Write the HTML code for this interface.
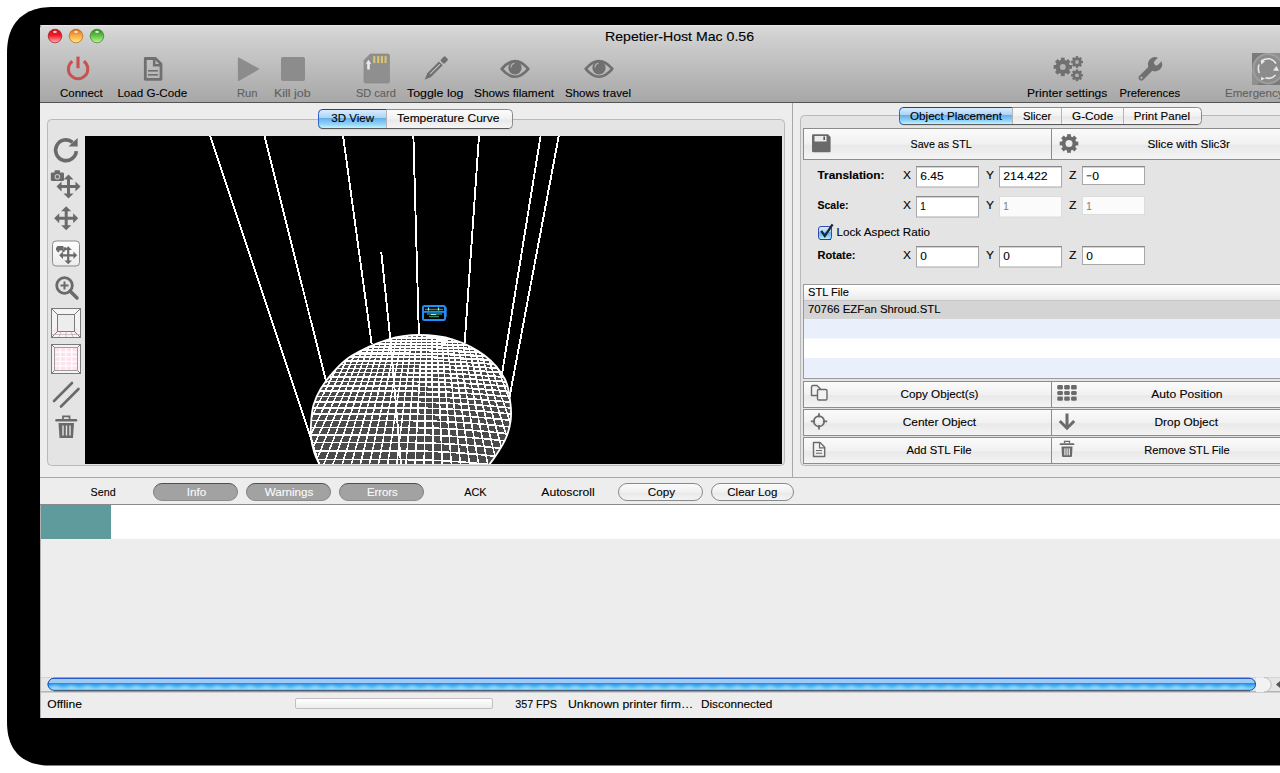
<!DOCTYPE html>
<html><head><meta charset="utf-8"><style>
html,body{margin:0;padding:0;background:#fff;overflow:hidden;width:1280px;height:773px;}
svg{display:block;font-family:"Liberation Sans",sans-serif;}
</style></head><body>
<svg width="1280" height="773" viewBox="0 0 1280 773">
<defs>
<linearGradient id="gTool" x1="0" y1="0" x2="0" y2="1">
 <stop offset="0" stop-color="#dcdcdc"/><stop offset="0.15" stop-color="#d0d0d0"/><stop offset="1" stop-color="#a7a7a7"/>
</linearGradient>
<linearGradient id="gTabSel" x1="0" y1="0" x2="0" y2="1">
 <stop offset="0" stop-color="#dcefff"/><stop offset="0.42" stop-color="#acd4f6"/><stop offset="0.47" stop-color="#66b0ea"/><stop offset="0.8" stop-color="#98d6fa"/><stop offset="1" stop-color="#c4fbff"/>
</linearGradient>
<linearGradient id="gTab" x1="0" y1="0" x2="0" y2="1">
 <stop offset="0" stop-color="#fdfdfd"/><stop offset="0.5" stop-color="#f1f1f1"/><stop offset="0.55" stop-color="#e8e8e8"/><stop offset="1" stop-color="#f6f6f6"/>
</linearGradient>
<linearGradient id="gBtn" x1="0" y1="0" x2="0" y2="1">
 <stop offset="0" stop-color="#fbfbfb"/><stop offset="0.5" stop-color="#f1f1f1"/><stop offset="0.55" stop-color="#e9e9e9"/><stop offset="1" stop-color="#f4f4f4"/>
</linearGradient>
<linearGradient id="gBevel" x1="0" y1="0" x2="0" y2="1">
 <stop offset="0" stop-color="#ffffff"/><stop offset="1" stop-color="#ececec"/>
</linearGradient>
<linearGradient id="gHdr" x1="0" y1="0" x2="0" y2="1">
 <stop offset="0" stop-color="#ffffff"/><stop offset="0.5" stop-color="#f6f6f6"/><stop offset="1" stop-color="#e9e9e9"/>
</linearGradient>
<linearGradient id="gProg" x1="0" y1="0" x2="0" y2="1">
 <stop offset="0" stop-color="#3a70d8"/><stop offset="0.1" stop-color="#a4ccf2"/><stop offset="0.38" stop-color="#9ec9f0"/><stop offset="0.42" stop-color="#1e8ee8"/><stop offset="1" stop-color="#9eeefe"/>
</linearGradient>
<linearGradient id="gTrack" x1="0" y1="0" x2="0" y2="1">
 <stop offset="0" stop-color="#b0b0b0"/><stop offset="0.2" stop-color="#f0f0f0"/><stop offset="1" stop-color="#dcdcdc"/>
</linearGradient>
<linearGradient id="gRed" x1="0" y1="0" x2="0" y2="1"><stop offset="0" stop-color="#c8101a"/><stop offset="0.45" stop-color="#f41828"/><stop offset="1" stop-color="#ffb4bc"/></linearGradient>
<linearGradient id="gYel" x1="0" y1="0" x2="0" y2="1"><stop offset="0" stop-color="#d86a10"/><stop offset="0.45" stop-color="#f8a848"/><stop offset="1" stop-color="#ffee80"/></linearGradient>
<linearGradient id="gGrn" x1="0" y1="0" x2="0" y2="1"><stop offset="0" stop-color="#2a8a20"/><stop offset="0.45" stop-color="#5cc040"/><stop offset="1" stop-color="#c4f49a"/></linearGradient>
<radialGradient id="gSpot" cx="0.5" cy="0.5" r="0.5"><stop offset="0" stop-color="#ffffff" stop-opacity="0.3"/><stop offset="1" stop-color="#ffffff" stop-opacity="0"/></radialGradient>
<pattern id="pSpots" x="47" y="677.8" width="16.25" height="13" patternUnits="userSpaceOnUse"><ellipse cx="8" cy="9.5" rx="7" ry="4" fill="url(#gSpot)"/></pattern>
<linearGradient id="gPillStroke" x1="0" y1="0" x2="0" y2="1"><stop offset="0" stop-color="#505050"/><stop offset="0.3" stop-color="#7a7a7a"/><stop offset="1" stop-color="#8c8c8c"/></linearGradient>
<clipPath id="clipView"><rect x="85" y="136" width="697" height="328"/></clipPath>
<clipPath id="clipBed"><ellipse cx="410" cy="436" rx="100" ry="101"/></clipPath>
<clipPath id="clipBed2"><path d="M419,335 C429.83,335.00 442.07,336.08 453,339.5 C463.93,342.92 475.97,348.92 484.6,355.5 C493.23,362.08 500.48,370.92 504.8,379 C509.12,387.08 509.53,397.00 510.5,404 C511.47,411.00 511.28,415.50 510.6,421 C509.92,426.50 508.58,431.67 506.4,437 C504.22,442.33 500.90,447.83 497.5,453 C494.10,458.17 492.25,461.83 486,468 C479.75,474.17 486.00,486.33 460,490 C434.00,493.67 353.17,493.67 330,490 C306.83,486.33 323.60,474.17 321,468 C318.40,461.83 316.07,458.17 314.4,453 C312.73,447.83 311.53,442.33 311,437 C310.47,431.67 310.77,426.38 311.2,421 C311.63,415.62 311.98,410.12 313.6,404.7 C315.22,399.28 317.67,393.88 320.9,388.5 C324.13,383.12 327.82,377.90 333,372.4 C338.18,366.90 342.83,360.98 352,355.5 C361.17,350.02 376.83,342.92 388,339.5 C399.17,336.08 408.17,335.00 419,335 Z"/></clipPath></defs>
<rect x="0" y="0" width="1280" height="773" fill="#fff"/>
<path d="M1300,7 L55.00,7.00 L50.68,7.05 L47.40,7.21 L44.44,7.48 L41.68,7.86 L39.08,8.34 L36.60,8.93 L34.23,9.62 L31.97,10.42 L29.81,11.32 L27.74,12.32 L25.77,13.42 L23.89,14.63 L22.11,15.93 L20.42,17.33 L18.83,18.83 L17.33,20.42 L15.93,22.11 L14.63,23.89 L13.42,25.77 L12.32,27.74 L11.32,29.81 L10.42,31.97 L9.62,34.23 L8.93,36.60 L8.34,39.08 L7.86,41.68 L7.48,44.44 L7.21,47.40 L7.05,50.68 L7.00,55.00 L7.00,719.60 L7.05,723.94 L7.20,727.15 L7.45,730.03 L7.81,732.69 L8.26,735.20 L8.81,737.58 L9.46,739.84 L10.21,742.00 L11.06,744.06 L12.00,746.02 L13.04,747.89 L14.17,749.67 L15.40,751.36 L16.72,752.96 L18.14,754.46 L19.64,755.88 L21.24,757.20 L22.93,758.43 L24.71,759.56 L26.58,760.60 L28.54,761.54 L30.60,762.39 L32.76,763.14 L35.02,763.79 L37.40,764.34 L39.91,764.79 L42.57,765.15 L45.45,765.40 L48.66,765.55 L53.00,765.60 L1300,765.6 Z" fill="#000"/>
<path d="M40,29 Q40,25 44,25 L1280,25 L1280,718 L40,718 Z" fill="#ededed"/>
<path d="M40,29 Q40,25 44,25 L1280,25 L1280,102 L40,102 Z" fill="url(#gTool)"/>
<rect x="40" y="25" width="1240" height="1" fill="#ececec" opacity="0.8"/>
<rect x="40" y="102" width="1240" height="1" fill="#545454"/>
<circle cx="55" cy="36" r="6.8" fill="url(#gRed)" stroke="#9a1010" stroke-width="0.9" stroke-opacity="0.75"/>
<ellipse cx="55" cy="31.9" rx="1.9" ry="1.1" fill="#fff" opacity="0.8"/>
<circle cx="76" cy="36" r="6.8" fill="url(#gYel)" stroke="#b0600a" stroke-width="0.9" stroke-opacity="0.75"/>
<ellipse cx="76" cy="31.9" rx="1.9" ry="1.1" fill="#fff" opacity="0.8"/>
<circle cx="97" cy="36" r="6.8" fill="url(#gGrn)" stroke="#2f7a20" stroke-width="0.9" stroke-opacity="0.75"/>
<ellipse cx="97" cy="31.9" rx="1.9" ry="1.1" fill="#fff" opacity="0.8"/>
<text x="605" y="40.5" font-size="13" font-weight="normal" fill="#000" text-anchor="start" textLength="149" lengthAdjust="spacingAndGlyphs" stroke="#000" stroke-width="0.1" >Repetier-Host Mac 0.56</text>
<text x="60" y="96.9" font-size="11" font-weight="normal" fill="#000" text-anchor="start" textLength="42.7" lengthAdjust="spacingAndGlyphs" stroke="#000" stroke-width="0.1" >Connect</text>
<text x="117.4" y="96.9" font-size="11" font-weight="normal" fill="#000" text-anchor="start" textLength="69.7" lengthAdjust="spacingAndGlyphs" stroke="#000" stroke-width="0.1" >Load G-Code</text>
<text x="237" y="96.9" font-size="11" font-weight="normal" fill="#606060" text-anchor="start" textLength="20.5" lengthAdjust="spacingAndGlyphs" stroke="#606060" stroke-width="0.1" >Run</text>
<text x="274" y="96.9" font-size="11" font-weight="normal" fill="#606060" text-anchor="start" textLength="36.6" lengthAdjust="spacingAndGlyphs" stroke="#606060" stroke-width="0.1" >Kill job</text>
<text x="356" y="96.9" font-size="11" font-weight="normal" fill="#606060" text-anchor="start" textLength="39.8" lengthAdjust="spacingAndGlyphs" stroke="#606060" stroke-width="0.1" >SD card</text>
<text x="407" y="96.9" font-size="11" font-weight="normal" fill="#000" text-anchor="start" textLength="56.4" lengthAdjust="spacingAndGlyphs" stroke="#000" stroke-width="0.1" >Toggle log</text>
<text x="474" y="96.9" font-size="11" font-weight="normal" fill="#000" text-anchor="start" textLength="80.1" lengthAdjust="spacingAndGlyphs" stroke="#000" stroke-width="0.1" >Shows filament</text>
<text x="565" y="96.9" font-size="11" font-weight="normal" fill="#000" text-anchor="start" textLength="66" lengthAdjust="spacingAndGlyphs" stroke="#000" stroke-width="0.1" >Shows travel</text>
<text x="1027" y="96.9" font-size="11" font-weight="normal" fill="#000" text-anchor="start" textLength="80.3" lengthAdjust="spacingAndGlyphs" stroke="#000" stroke-width="0.1" >Printer settings</text>
<text x="1119.5" y="96.9" font-size="11" font-weight="normal" fill="#000" text-anchor="start" textLength="60.5" lengthAdjust="spacingAndGlyphs" stroke="#000" stroke-width="0.1" >Preferences</text>
<text x="1225" y="96.9" font-size="11" font-weight="normal" fill="#606060" text-anchor="start" textLength="58.5" lengthAdjust="spacingAndGlyphs" stroke="#606060" stroke-width="0.1" >Emergency</text>
<path d="M72.4,61.2 A9.7,9.7 0 1 0 83.8,61.2" fill="none" stroke="#c85252" stroke-width="3" stroke-linecap="butt"/>
<rect x="76.4" y="56.6" width="3.2" height="11.6" fill="#c85252"/>
<path d="M145.3,58.5 L155.5,58.5 L161,64 L161,79.3 L145.3,79.3 Z" fill="none" stroke="#707070" stroke-width="2.8" stroke-linejoin="round"/>
<path d="M154.2,58.5 L154.2,65.3 L161,65.3" fill="none" stroke="#707070" stroke-width="2.6"/>
<rect x="148" y="70" width="10" height="1.6" fill="#707070"/><rect x="148" y="74" width="10" height="1.6" fill="#707070"/>
<path d="M238.5,58 L258.5,69 L238.5,80.5 Z" fill="#8c8c8c" stroke="#8c8c8c" stroke-width="1.2" stroke-linejoin="round"/>
<rect x="281" y="57" width="24" height="24" rx="2" fill="#8c8c8c"/>
<path d="M370.3,54 L388,54 Q389.5,54 389.5,55.5 L389.5,81.5 Q389.5,83 388,83 L365.5,83 Q364,83 364,81.5 L364,60.3 Z" fill="#8f8f8f" stroke="#858585" stroke-width="0.6"/>
<rect x="373.2" y="56.1" width="2.1" height="7" fill="#dcc470"/>
<rect x="377.2" y="56.1" width="2.1" height="7" fill="#dcc470"/>
<rect x="380.9" y="56.1" width="2.1" height="7" fill="#dcc470"/>
<rect x="384.5" y="56.1" width="2.1" height="7" fill="#dcc470"/>
<path d="M368.5,59.8 L371.2,63.8 L369.8,63.8 L369.8,69.6 L367.2,69.6 L367.2,63.8 L365.8,63.8 Z" fill="#ececec"/>
<g transform="translate(424.6,79.7) rotate(-45)" fill="#707070"><path d="M0,0 L6.5,-2.7 L6.5,2.7 Z"/><rect x="6" y="-2.7" width="17" height="5.4"/><rect x="24.6" y="-2.7" width="6.4" height="5.4" rx="1.3"/><rect x="8" y="-0.6" width="14" height="1" fill="#e0e0e0" opacity="0.75"/></g>
<path d="M501.7,68.9 Q515,53.2 528.3,68.9 Q515,84.6 501.7,68.9 Z" fill="none" stroke="#707070" stroke-width="2.7" stroke-linejoin="round"/>
<circle cx="515" cy="67.8" r="6.7" fill="#707070"/>
<path d="M511,67.5 A4.3,4.3 0 0 1 514.5,63.3" fill="none" stroke="#b8b8b8" stroke-width="1.1"/>
<path d="M585.7,68.9 Q599,53.2 612.3,68.9 Q599,84.6 585.7,68.9 Z" fill="none" stroke="#707070" stroke-width="2.7" stroke-linejoin="round"/>
<circle cx="599" cy="67.8" r="6.7" fill="#707070"/>
<path d="M595,67.5 A4.3,4.3 0 0 1 598.5,63.3" fill="none" stroke="#b8b8b8" stroke-width="1.1"/>
<circle cx="1062.8" cy="66.9" r="7.175999999999999" fill="#707070"/>
<rect x="1060.8999999999999" y="57.7" width="3.8" height="9.2" fill="#707070" transform="rotate(0.0 1062.8 66.9)"/>
<rect x="1060.8999999999999" y="57.7" width="3.8" height="9.2" fill="#707070" transform="rotate(45.0 1062.8 66.9)"/>
<rect x="1060.8999999999999" y="57.7" width="3.8" height="9.2" fill="#707070" transform="rotate(90.0 1062.8 66.9)"/>
<rect x="1060.8999999999999" y="57.7" width="3.8" height="9.2" fill="#707070" transform="rotate(135.0 1062.8 66.9)"/>
<rect x="1060.8999999999999" y="57.7" width="3.8" height="9.2" fill="#707070" transform="rotate(180.0 1062.8 66.9)"/>
<rect x="1060.8999999999999" y="57.7" width="3.8" height="9.2" fill="#707070" transform="rotate(225.0 1062.8 66.9)"/>
<rect x="1060.8999999999999" y="57.7" width="3.8" height="9.2" fill="#707070" transform="rotate(270.0 1062.8 66.9)"/>
<rect x="1060.8999999999999" y="57.7" width="3.8" height="9.2" fill="#707070" transform="rotate(315.0 1062.8 66.9)"/>
<circle cx="1062.8" cy="66.9" r="3.0" fill="#b2b2b2"/>
<circle cx="1077" cy="62" r="4.602" fill="#707070"/>
<rect x="1075.75" y="56.1" width="2.5" height="5.9" fill="#707070" transform="rotate(0.0 1077 62)"/>
<rect x="1075.75" y="56.1" width="2.5" height="5.9" fill="#707070" transform="rotate(45.0 1077 62)"/>
<rect x="1075.75" y="56.1" width="2.5" height="5.9" fill="#707070" transform="rotate(90.0 1077 62)"/>
<rect x="1075.75" y="56.1" width="2.5" height="5.9" fill="#707070" transform="rotate(135.0 1077 62)"/>
<rect x="1075.75" y="56.1" width="2.5" height="5.9" fill="#707070" transform="rotate(180.0 1077 62)"/>
<rect x="1075.75" y="56.1" width="2.5" height="5.9" fill="#707070" transform="rotate(225.0 1077 62)"/>
<rect x="1075.75" y="56.1" width="2.5" height="5.9" fill="#707070" transform="rotate(270.0 1077 62)"/>
<rect x="1075.75" y="56.1" width="2.5" height="5.9" fill="#707070" transform="rotate(315.0 1077 62)"/>
<circle cx="1077" cy="62" r="1.9" fill="#b2b2b2"/>
<circle cx="1077" cy="75.3" r="4.602" fill="#707070"/>
<rect x="1075.75" y="69.39999999999999" width="2.5" height="5.9" fill="#707070" transform="rotate(0.0 1077 75.3)"/>
<rect x="1075.75" y="69.39999999999999" width="2.5" height="5.9" fill="#707070" transform="rotate(45.0 1077 75.3)"/>
<rect x="1075.75" y="69.39999999999999" width="2.5" height="5.9" fill="#707070" transform="rotate(90.0 1077 75.3)"/>
<rect x="1075.75" y="69.39999999999999" width="2.5" height="5.9" fill="#707070" transform="rotate(135.0 1077 75.3)"/>
<rect x="1075.75" y="69.39999999999999" width="2.5" height="5.9" fill="#707070" transform="rotate(180.0 1077 75.3)"/>
<rect x="1075.75" y="69.39999999999999" width="2.5" height="5.9" fill="#707070" transform="rotate(225.0 1077 75.3)"/>
<rect x="1075.75" y="69.39999999999999" width="2.5" height="5.9" fill="#707070" transform="rotate(270.0 1077 75.3)"/>
<rect x="1075.75" y="69.39999999999999" width="2.5" height="5.9" fill="#707070" transform="rotate(315.0 1077 75.3)"/>
<circle cx="1077" cy="75.3" r="1.9" fill="#b2b2b2"/>
<g transform="translate(1155,64.2) rotate(45)" fill="#707070"><path d="M-2.5,-6.75 A7.2,7.2 0 1 0 2.5,-6.75 L2.5,-2 A2.5,2.5 0 0 1 -2.5,-2 Z"/><path d="M-2.8,2 L-2.8,19.2 A2.8,2.8 0 0 0 2.8,19.2 L2.8,2 Z"/><circle cx="0" cy="19.2" r="1.2" fill="#b4b4b4"/></g>
<rect x="1252" y="53" width="30" height="32" fill="#7a7a7a"/>
<path d="M1252,70 L1269,53 L1282,53 L1282,60 L1257,85 L1252,85 Z" fill="#9c9c9c" opacity="0.6"/>
<circle cx="1268" cy="68.7" r="14.7" fill="#8c8c8c" stroke="#9e9e9e" stroke-width="2"/>
<path d="M1261,61.5 A9.5,9.5 0 0 1 1276,63.5 M1275.5,75 A9.5,9.5 0 0 1 1265.5,77.8 M1259.5,73 A9.5,9.5 0 0 1 1259.2,64.5" fill="none" stroke="#e8e8e8" stroke-width="1.6"/>
<path d="M1261,59.5 L1261,64.5 L1265,61.5 Z M1276.5,66 L1279,71 L1273,70.5 Z M1261,77 L1265,78.5 L1261,80.5 Z" fill="#e8e8e8"/>
<rect x="792" y="103" width="1" height="374" fill="#a8a8a8"/>
<rect x="40" y="477" width="1240" height="1" fill="#a8a8a8"/>
<rect x="47.5" y="119.5" width="737" height="346" rx="4" fill="#e4e4e4" stroke="#b9b9b9"/>
<rect x="85" y="136" width="697" height="328" fill="#000"/>
<rect x="318.5" y="110.5" width="194" height="19" rx="4" fill="#000" opacity="0.12"/>
<rect x="318.5" y="109.5" width="194" height="19" rx="4" fill="url(#gTab)" stroke="#8a8a8a"/>
<clipPath id="c318"><rect x="318" y="109" width="68" height="20"/></clipPath>
<rect x="318.5" y="109.5" width="194" height="19" rx="4" fill="url(#gTabSel)" stroke="#2f62c8" clip-path="url(#c318)"/>
<rect x="322" y="109" width="64" height="1" fill="#3434a0"/>
<rect x="322" y="128" width="187" height="1" fill="#5a5a5a"/>
<rect x="386" y="110" width="1" height="18" fill="#b4b4b4"/>
<text x="331.3" y="122" font-size="11" font-weight="normal" fill="#000" text-anchor="start" textLength="42.7" lengthAdjust="spacingAndGlyphs" stroke="#000" stroke-width="0.1" >3D View</text>
<text x="397" y="122" font-size="11" font-weight="normal" fill="#000" text-anchor="start" textLength="102.5" lengthAdjust="spacingAndGlyphs" stroke="#000" stroke-width="0.1" >Temperature Curve</text>
<path d="M72.6,142.3 A10.35,10.35 0 1 0 76.3,151.1" fill="none" stroke="#6a6a6a" stroke-width="3.6"/>
<path d="M68.5,146.6 L77.6,146.6 L77.6,138 Z" fill="#6a6a6a"/>
<path d="M59.5,186.5 L77.5,186.5 M68.5,177.5 L68.5,195.5" stroke="#6a6a6a" stroke-width="3"/>
<path d="M80.5,186.5 L75.46,181.46 L75.46,191.54 Z" fill="#6a6a6a"/>
<path d="M56.5,186.5 L61.54,181.46 L61.54,191.54 Z" fill="#6a6a6a"/>
<path d="M68.5,198.5 L63.46,193.46 L73.54,193.46 Z" fill="#6a6a6a"/>
<path d="M68.5,174.5 L63.46,179.54 L73.54,179.54 Z" fill="#6a6a6a"/>
<rect x="50.8" y="172.5" width="13.2" height="8.5" rx="1.2" fill="#6a6a6a"/><rect x="54.5" y="170.2" width="5.5" height="3" rx="0.8" fill="#6a6a6a"/><circle cx="57.4" cy="176.7" r="2.8" fill="#c8c8c8"/><circle cx="57.4" cy="176.7" r="1.7" fill="#6a6a6a"/>
<path d="M57.2,218.3 L75.2,218.3 M66.2,209.3 L66.2,227.3" stroke="#6a6a6a" stroke-width="3"/>
<path d="M78.2,218.3 L73.16,213.26000000000002 L73.16,223.34 Z" fill="#6a6a6a"/>
<path d="M54.2,218.3 L59.24,213.26000000000002 L59.24,223.34 Z" fill="#6a6a6a"/>
<path d="M66.2,230.3 L61.160000000000004,225.26000000000002 L71.24000000000001,225.26000000000002 Z" fill="#6a6a6a"/>
<path d="M66.2,206.3 L61.160000000000004,211.34 L71.24000000000001,211.34 Z" fill="#6a6a6a"/>
<rect x="52.5" y="241" width="27" height="25" rx="3.5" fill="url(#gBevel)" stroke="#8a8a8a"/>
<path d="M62.2,255.3 L74.2,255.3 M68.2,249.3 L68.2,261.3" stroke="#6a6a6a" stroke-width="2.2"/>
<path d="M77.2,255.3 L73.42,251.52 L73.42,259.08 Z" fill="#6a6a6a"/>
<path d="M59.2,255.3 L62.980000000000004,251.52 L62.980000000000004,259.08 Z" fill="#6a6a6a"/>
<path d="M68.2,264.3 L64.42,260.52000000000004 L71.98,260.52000000000004 Z" fill="#6a6a6a"/>
<path d="M68.2,246.3 L64.42,250.08 L71.98,250.08 Z" fill="#6a6a6a"/>
<path d="M57.5,246 L63.5,246 L63.5,250.5 L56,250.5 L56,248 Z" fill="#6a6a6a"/><rect x="63.5" y="247.3" width="2.5" height="3.2" fill="#6a6a6a"/><circle cx="58.3" cy="251" r="1.2" fill="#6a6a6a"/><circle cx="63.5" cy="251" r="1.2" fill="#6a6a6a"/>
<circle cx="64.5" cy="285.5" r="7.8" fill="none" stroke="#6a6a6a" stroke-width="2.8"/>
<path d="M70,291 L77,298" stroke="#6a6a6a" stroke-width="3.5" stroke-linecap="round"/>
<path d="M60.5,285.5 L68.5,285.5 M64.5,281.5 L64.5,289.5" stroke="#6a6a6a" stroke-width="2"/>
<rect x="51.5" y="308.5" width="29" height="29" fill="#f4f4f4" stroke="#7a7a7a"/>
<path d="M51.5,332 L57.5,326 L74.5,326 L80.5,332 Z" fill="#fbe4ee"/>
<rect x="57.5" y="314.5" width="17" height="17" fill="#ededed" stroke="#7a7a7a"/>
<path d="M51.5,308.5 L57.5,314.5 M80.5,308.5 L74.5,314.5 M51.5,337.5 L57.5,331.5 M80.5,337.5 L74.5,331.5" stroke="#7a7a7a"/>
<path d="M52,334.5 L80,334.5 M61,331.5 L59,337 M66,331.5 L66,337 M71,331.5 L73,337" stroke="#c0a8b0" stroke-width="0.7"/>
<rect x="51.5" y="344.5" width="29" height="29" fill="#f4f4f4" stroke="#7a7a7a"/>
<path d="M51.5,344.5 L54.5,347.5 M80.5,344.5 L77.5,347.5 M51.5,373.5 L54.5,370.5 M80.5,373.5 L77.5,370.5" stroke="#7a7a7a"/>
<rect x="54.5" y="347.5" width="23" height="23" fill="#fde1ec" stroke="#8a8a8a" stroke-width="0.8"/>
<rect x="59.65" y="348" width="1.2" height="22" fill="#fff"/>
<rect x="65.4" y="348" width="1.2" height="22" fill="#fff"/>
<rect x="71.15" y="348" width="1.2" height="22" fill="#fff"/>
<rect x="55" y="351.5" width="22" height="1.2" fill="#fff"/>
<rect x="55" y="356.09999999999997" width="22" height="1.2" fill="#fff"/>
<rect x="55" y="360.7" width="22" height="1.2" fill="#fff"/>
<rect x="55" y="365.29999999999995" width="22" height="1.2" fill="#fff"/>
<path d="M54,401 L72,383 M61,406.5 L78.5,389" stroke="#6a6a6a" stroke-width="2.6" stroke-linecap="round"/>
<path d="M56.5,420.3 L76,420.3" stroke="#6a6a6a" stroke-width="2.5" stroke-linecap="round"/>
<path d="M63,419 L63,416.3 L69.5,416.3 L69.5,419" fill="none" stroke="#6a6a6a" stroke-width="1.8"/>
<path d="M58.5,423 L74,423 L73,438 L59.5,438 Z" fill="#6a6a6a"/>
<rect x="62.3" y="425.5" width="1.4" height="10" fill="#e4e4e4"/><rect x="65.8" y="425.5" width="1.4" height="10" fill="#e4e4e4"/><rect x="69.3" y="425.5" width="1.4" height="10" fill="#e4e4e4"/>
<g clip-path="url(#clipView)">
<g clip-path="url(#clipBed2)">
<rect x="300" y="330" width="220" height="140" fill="#4a4a4a"/>
<g shape-rendering="crispEdges">
<polyline points="296,490.00 306,490.00 316,490.00 326,490.00 336,490.00 346,490.00 356,490.00 366,490.00 376,490.00 386,490.00 396,490.00 406,490.02 416,490.17 426,490.46 436,490.88 446,491.43 456,492.13 466,492.95 476,493.91 486,495.01 496,496.25 506,497.62 516,499.12" fill="none" stroke="#fff" stroke-width="1.6"/>
<polyline points="296,479.17 306,479.17 316,479.17 326,479.17 336,479.17 346,479.17 356,479.17 366,479.17 376,479.17 386,479.17 396,479.17 406,479.19 416,479.34 426,479.61 436,480.02 446,480.55 456,481.22 466,482.02 476,482.95 486,484.00 496,485.19 506,486.51 516,487.97" fill="none" stroke="#fff" stroke-width="1.6"/>
<polyline points="296,469.08 306,469.08 316,469.08 326,469.08 336,469.08 346,469.08 356,469.08 366,469.08 376,469.08 386,469.08 396,469.08 406,469.10 416,469.24 426,469.51 436,469.90 446,470.42 456,471.06 466,471.83 476,472.73 486,473.75 496,474.90 506,476.17 516,477.58" fill="none" stroke="#fff" stroke-width="1.6"/>
<polyline points="296,459.66 306,459.66 316,459.66 326,459.66 336,459.66 346,459.66 356,459.66 366,459.66 376,459.66 386,459.66 396,459.66 406,459.68 416,459.82 426,460.08 436,460.45 446,460.95 456,461.58 466,462.32 476,463.19 486,464.18 496,465.29 506,466.52 516,467.88" fill="none" stroke="#fff" stroke-width="1.6"/>
<polyline points="296,450.85 306,450.85 316,450.85 326,450.85 336,450.85 346,450.85 356,450.85 366,450.85 376,450.85 386,450.85 396,450.85 406,450.87 416,451.00 426,451.25 436,451.61 446,452.10 456,452.70 466,453.42 476,454.26 486,455.22 496,456.29 506,457.49 516,458.80" fill="none" stroke="#fff" stroke-width="1.6"/>
<polyline points="296,442.58 306,442.58 316,442.58 326,442.58 336,442.58 346,442.58 356,442.58 366,442.58 376,442.58 386,442.58 396,442.58 406,442.60 416,442.73 426,442.97 436,443.32 446,443.79 456,444.38 466,445.08 476,445.89 486,446.82 496,447.86 506,449.01 516,450.28" fill="none" stroke="#fff" stroke-width="1.6"/>
<polyline points="296,434.81 306,434.81 316,434.81 326,434.81 336,434.81 346,434.81 356,434.81 366,434.81 376,434.81 386,434.81 396,434.81 406,434.83 416,434.96 426,435.19 436,435.53 446,435.99 456,436.56 466,437.23 476,438.02 486,438.92 496,439.93 506,441.05 516,442.28" fill="none" stroke="#fff" stroke-width="1.6"/>
<polyline points="296,427.50 306,427.50 316,427.50 326,427.50 336,427.50 346,427.50 356,427.50 366,427.50 376,427.50 386,427.50 396,427.50 406,427.52 416,427.64 426,427.87 436,428.20 446,428.64 456,429.19 466,429.85 476,430.61 486,431.49 496,432.47 506,433.56 516,434.75" fill="none" stroke="#fff" stroke-width="1.6"/>
<polyline points="296,420.60 306,420.60 316,420.60 326,420.60 336,420.60 346,420.60 356,420.60 366,420.60 376,420.60 386,420.60 396,420.60 406,420.62 416,420.74 426,420.96 436,421.28 446,421.71 456,422.25 466,422.88 476,423.63 486,424.48 496,425.43 506,426.49 516,427.65" fill="none" stroke="#fff" stroke-width="1.6"/>
<polyline points="296,414.09 306,414.09 316,414.09 326,414.09 336,414.09 346,414.09 356,414.09 366,414.09 376,414.09 386,414.09 396,414.09 406,414.11 416,414.22 426,414.43 436,414.75 446,415.17 456,415.69 466,416.31 476,417.03 486,417.85 496,418.78 506,419.81 516,420.94" fill="none" stroke="#fff" stroke-width="1.6"/>
<polyline points="296,407.92 306,407.92 316,407.92 326,407.92 336,407.92 346,407.92 356,407.92 366,407.92 376,407.92 386,407.92 396,407.92 406,407.94 416,408.05 426,408.26 436,408.57 446,408.97 456,409.48 466,410.08 476,410.79 486,411.59 496,412.49 506,413.49 516,414.59" fill="none" stroke="#fff" stroke-width="1.6"/>
<polyline points="296,402.08 306,402.08 316,402.08 326,402.08 336,402.08 346,402.08 356,402.08 366,402.08 376,402.08 386,402.08 396,402.08 406,402.10 416,402.21 426,402.41 436,402.71 446,403.10 456,403.60 466,404.18 476,404.87 486,405.65 496,406.53 506,407.50 516,408.57" fill="none" stroke="#fff" stroke-width="1.6"/>
<polyline points="296,396.54 306,396.54 316,396.54 326,396.54 336,396.54 346,396.54 356,396.54 366,396.54 376,396.54 386,396.54 396,396.54 406,396.56 416,396.66 426,396.86 436,397.15 446,397.53 456,398.01 466,398.59 476,399.25 486,400.02 496,400.87 506,401.82 516,402.86" fill="none" stroke="#fff" stroke-width="1.6"/>
<polyline points="296,391.27 306,391.27 316,391.27 326,391.27 336,391.27 346,391.27 356,391.27 366,391.27 376,391.27 386,391.27 396,391.27 406,391.29 416,391.39 426,391.58 436,391.87 446,392.24 456,392.71 466,393.27 476,393.92 486,394.66 496,395.50 506,396.42 516,397.44" fill="none" stroke="#fff" stroke-width="1.8"/>
<polyline points="296,386.26 306,386.26 316,386.26 326,386.26 336,386.26 346,386.26 356,386.26 366,386.26 376,386.26 386,386.26 396,386.26 406,386.28 416,386.37 426,386.56 436,386.84 446,387.21 456,387.66 466,388.21 476,388.84 486,389.57 496,390.38 506,391.29 516,392.28" fill="none" stroke="#fff" stroke-width="1.8"/>
<polyline points="296,381.49 306,381.49 316,381.49 326,381.49 336,381.49 346,381.49 356,381.49 366,381.49 376,381.49 386,381.49 396,381.49 406,381.50 416,381.60 426,381.78 436,382.05 446,382.41 456,382.86 466,383.39 476,384.01 486,384.72 496,385.51 506,386.39 516,387.36" fill="none" stroke="#fff" stroke-width="1.8"/>
<polyline points="296,376.93 306,376.93 316,376.93 326,376.93 336,376.93 346,376.93 356,376.93 366,376.93 376,376.93 386,376.93 396,376.93 406,376.95 416,377.04 426,377.22 436,377.49 446,377.84 456,378.27 466,378.79 476,379.40 486,380.09 496,380.86 506,381.73 516,382.67" fill="none" stroke="#fff" stroke-width="1.8"/>
<polyline points="296,372.59 306,372.59 316,372.59 326,372.59 336,372.59 346,372.59 356,372.59 366,372.59 376,372.59 386,372.59 396,372.59 406,372.60 416,372.69 426,372.87 436,373.13 446,373.47 456,373.90 466,374.40 476,375.00 486,375.67 496,376.43 506,377.27 516,378.20" fill="none" stroke="#fff" stroke-width="1.8"/>
<polyline points="296,368.43 306,368.43 316,368.43 326,368.43 336,368.43 346,368.43 356,368.43 366,368.43 376,368.43 386,368.43 396,368.43 406,368.45 416,368.54 426,368.71 436,368.96 446,369.30 456,369.71 466,370.21 476,370.79 486,371.45 496,372.19 506,373.01 516,373.92" fill="none" stroke="#fff" stroke-width="1.8"/>
<polyline points="296,364.46 306,364.46 316,364.46 326,364.46 336,364.46 346,364.46 356,364.46 366,364.46 376,364.46 386,364.46 396,364.46 406,364.47 416,364.56 426,364.73 436,364.98 446,365.30 456,365.71 466,366.20 476,366.76 486,367.41 496,368.14 506,368.94 516,369.83" fill="none" stroke="#fff" stroke-width="1.8"/>
<polyline points="296,360.65 306,360.65 316,360.65 326,360.65 336,360.65 346,360.65 356,360.65 366,360.65 376,360.65 386,360.65 396,360.65 406,360.67 416,360.75 426,360.92 436,361.16 446,361.48 456,361.88 466,362.36 476,362.91 486,363.54 496,364.25 506,365.04 516,365.91" fill="none" stroke="#fff" stroke-width="1.8"/>
<polyline points="296,357.01 306,357.01 316,357.01 326,357.01 336,357.01 346,357.01 356,357.01 366,357.01 376,357.01 386,357.01 396,357.01 406,357.02 416,357.11 426,357.27 436,357.50 446,357.82 456,358.21 466,358.67 476,359.22 486,359.83 496,360.53 506,361.30 516,362.15" fill="none" stroke="#fff" stroke-width="2.1"/>
<polyline points="296,353.51 306,353.51 316,353.51 326,353.51 336,353.51 346,353.51 356,353.51 366,353.51 376,353.51 386,353.51 396,353.51 406,353.52 416,353.60 426,353.76 436,353.99 446,354.30 456,354.68 466,355.14 476,355.67 486,356.28 496,356.96 506,357.72 516,358.55" fill="none" stroke="#fff" stroke-width="2.1"/>
<polyline points="296,350.15 306,350.15 316,350.15 326,350.15 336,350.15 346,350.15 356,350.15 366,350.15 376,350.15 386,350.15 396,350.15 406,350.16 416,350.24 426,350.40 436,350.62 446,350.93 456,351.30 466,351.75 476,352.27 486,352.86 496,353.53 506,354.27 516,355.09" fill="none" stroke="#fff" stroke-width="2.1"/>
<polyline points="296,346.92 306,346.92 316,346.92 326,346.92 336,346.92 346,346.92 356,346.92 366,346.92 376,346.92 386,346.92 396,346.92 406,346.93 416,347.01 426,347.16 436,347.39 446,347.68 456,348.05 466,348.49 476,349.00 486,349.58 496,350.24 506,350.96 516,351.76" fill="none" stroke="#fff" stroke-width="2.1"/>
<polyline points="296,343.82 306,343.82 316,343.82 326,343.82 336,343.82 346,343.82 356,343.82 366,343.82 376,343.82 386,343.82 396,343.82 406,343.83 416,343.91 426,344.06 436,344.27 446,344.56 456,344.92 466,345.35 476,345.86 486,346.43 496,347.07 506,347.78 516,348.57" fill="none" stroke="#fff" stroke-width="2.1"/>
<polyline points="296,340.83 306,340.83 316,340.83 326,340.83 336,340.83 346,340.83 356,340.83 366,340.83 376,340.83 386,340.83 396,340.83 406,340.84 416,340.92 426,341.06 436,341.28 446,341.56 456,341.92 466,342.34 476,342.83 486,343.39 496,344.02 506,344.72 516,345.49" fill="none" stroke="#fff" stroke-width="2.1"/>
<polyline points="296,337.95 306,337.95 316,337.95 326,337.95 336,337.95 346,337.95 356,337.95 366,337.95 376,337.95 386,337.95 396,337.95 406,337.96 416,338.04 426,338.18 436,338.39 446,338.67 456,339.02 466,339.43 476,339.92 486,340.47 496,341.08 506,341.77 516,342.53" fill="none" stroke="#fff" stroke-width="2.1"/>
<polyline points="296,335.18 306,335.18 316,335.18 326,335.18 336,335.18 346,335.18 356,335.18 366,335.18 376,335.18 386,335.18 396,335.18 406,335.19 416,335.26 426,335.41 436,335.61 446,335.89 456,336.23 466,336.63 476,337.11 486,337.65 496,338.26 506,338.93 516,339.67" fill="none" stroke="#fff" stroke-width="2.1"/>
<polyline points="296,332.51 306,332.51 316,332.51 326,332.51 336,332.51 346,332.51 356,332.51 366,332.51 376,332.51 386,332.51 396,332.51 406,332.52 416,332.59 426,332.73 436,332.93 446,333.20 456,333.53 466,333.93 476,334.40 486,334.93 496,335.53 506,336.19 516,336.92" fill="none" stroke="#fff" stroke-width="2.1"/>
<polyline points="296,329.92 306,329.92 316,329.92 326,329.92 336,329.92 346,329.92 356,329.92 366,329.92 376,329.92 386,329.92 396,329.92 406,329.94 416,330.01 426,330.14 436,330.34 446,330.61 456,330.93 466,331.33 476,331.79 486,332.31 496,332.89 506,333.54 516,334.26" fill="none" stroke="#fff" stroke-width="2.1"/>
<polyline points="296,327.43 306,327.43 316,327.43 326,327.43 336,327.43 346,327.43 356,327.43 366,327.43 376,327.43 386,327.43 396,327.43 406,327.44 416,327.51 426,327.65 436,327.84 446,328.10 456,328.43 466,328.81 476,329.26 486,329.77 496,330.35 506,330.99 516,331.69" fill="none" stroke="#fff" stroke-width="2.1"/>
<polyline points="296,325.03 306,325.03 316,325.03 326,325.03 336,325.03 346,325.03 356,325.03 366,325.03 376,325.03 386,325.03 396,325.03 406,325.04 416,325.11 426,325.24 436,325.43 446,325.68 456,326.00 466,326.38 476,326.82 486,327.33 496,327.89 506,328.52 516,329.21" fill="none" stroke="#fff" stroke-width="2.1"/>
<polyline points="296,322.70 306,322.70 316,322.70 326,322.70 336,322.70 346,322.70 356,322.70 366,322.70 376,322.70 386,322.70 396,322.70 406,322.71 416,322.78 426,322.90 436,323.09 446,323.35 456,323.66 466,324.03 476,324.47 486,324.96 496,325.52 506,326.14 516,326.82" fill="none" stroke="#fff" stroke-width="2.1"/>
<polyline points="296,320.45 306,320.45 316,320.45 326,320.45 336,320.45 346,320.45 356,320.45 366,320.45 376,320.45 386,320.45 396,320.45 406,320.46 416,320.52 426,320.65 436,320.84 446,321.08 456,321.39 466,321.76 476,322.19 486,322.67 496,323.22 506,323.83 516,324.50" fill="none" stroke="#fff" stroke-width="2.1"/>
<line x1="234.66" y1="490" x2="343.54" y2="320" stroke="#fff" stroke-width="1.55"/>
<line x1="244.61" y1="490" x2="347.94" y2="320" stroke="#fff" stroke-width="1.55"/>
<line x1="254.55" y1="490" x2="352.34" y2="320" stroke="#fff" stroke-width="1.55"/>
<line x1="264.49" y1="490" x2="356.74" y2="320" stroke="#fff" stroke-width="1.55"/>
<line x1="274.43" y1="490" x2="361.14" y2="320" stroke="#fff" stroke-width="1.55"/>
<line x1="284.37" y1="490" x2="365.54" y2="320" stroke="#fff" stroke-width="1.55"/>
<line x1="294.31" y1="490" x2="369.94" y2="320" stroke="#fff" stroke-width="1.55"/>
<line x1="304.25" y1="490" x2="374.34" y2="320" stroke="#fff" stroke-width="1.55"/>
<line x1="314.19" y1="490" x2="378.74" y2="320" stroke="#fff" stroke-width="1.55"/>
<line x1="324.13" y1="490" x2="383.14" y2="320" stroke="#fff" stroke-width="1.55"/>
<line x1="334.07" y1="490" x2="387.54" y2="320" stroke="#fff" stroke-width="1.55"/>
<line x1="344.01" y1="490" x2="391.94" y2="320" stroke="#fff" stroke-width="1.55"/>
<line x1="353.95" y1="490" x2="396.34" y2="320" stroke="#fff" stroke-width="1.55"/>
<line x1="363.89" y1="490" x2="400.74" y2="320" stroke="#fff" stroke-width="1.55"/>
<line x1="373.83" y1="490" x2="405.14" y2="320" stroke="#fff" stroke-width="1.55"/>
<line x1="383.78" y1="490" x2="409.54" y2="320" stroke="#fff" stroke-width="1.55"/>
<line x1="393.72" y1="490" x2="413.94" y2="320" stroke="#fff" stroke-width="1.55"/>
<line x1="403.66" y1="490" x2="418.34" y2="320" stroke="#fff" stroke-width="1.55"/>
<line x1="413.60" y1="490" x2="422.74" y2="320" stroke="#fff" stroke-width="1.55"/>
<line x1="423.54" y1="490" x2="427.14" y2="320" stroke="#fff" stroke-width="1.55"/>
<line x1="433.48" y1="490" x2="431.54" y2="320" stroke="#fff" stroke-width="1.55"/>
<line x1="443.42" y1="490" x2="435.94" y2="320" stroke="#fff" stroke-width="1.55"/>
<line x1="453.36" y1="490" x2="440.34" y2="320" stroke="#fff" stroke-width="1.55"/>
<line x1="463.30" y1="490" x2="444.74" y2="320" stroke="#fff" stroke-width="1.55"/>
<line x1="473.24" y1="490" x2="449.14" y2="320" stroke="#fff" stroke-width="1.55"/>
<line x1="483.18" y1="490" x2="453.54" y2="320" stroke="#fff" stroke-width="1.55"/>
<line x1="493.12" y1="490" x2="457.94" y2="320" stroke="#fff" stroke-width="1.55"/>
<line x1="503.06" y1="490" x2="462.34" y2="320" stroke="#fff" stroke-width="1.55"/>
<line x1="513.01" y1="490" x2="466.74" y2="320" stroke="#fff" stroke-width="1.55"/>
<line x1="522.95" y1="490" x2="471.14" y2="320" stroke="#fff" stroke-width="1.55"/>
<line x1="532.89" y1="490" x2="475.54" y2="320" stroke="#fff" stroke-width="1.55"/>
<line x1="542.83" y1="490" x2="479.94" y2="320" stroke="#fff" stroke-width="1.55"/>
<line x1="552.77" y1="490" x2="484.34" y2="320" stroke="#fff" stroke-width="1.55"/>
<line x1="562.71" y1="490" x2="488.74" y2="320" stroke="#fff" stroke-width="1.55"/>
<line x1="572.65" y1="490" x2="493.14" y2="320" stroke="#fff" stroke-width="1.55"/>
<line x1="582.59" y1="490" x2="497.54" y2="320" stroke="#fff" stroke-width="1.55"/>
<line x1="592.53" y1="490" x2="501.94" y2="320" stroke="#fff" stroke-width="1.55"/>
<line x1="602.47" y1="490" x2="506.34" y2="320" stroke="#fff" stroke-width="1.55"/>
<line x1="612.41" y1="490" x2="510.74" y2="320" stroke="#fff" stroke-width="1.55"/>
<line x1="622.35" y1="490" x2="515.14" y2="320" stroke="#fff" stroke-width="1.55"/>
</g>
</g>
<path d="M419,335 C429.83,335.00 442.07,336.08 453,339.5 C463.93,342.92 475.97,348.92 484.6,355.5 C493.23,362.08 500.48,370.92 504.8,379 C509.12,387.08 509.53,397.00 510.5,404 C511.47,411.00 511.28,415.50 510.6,421 C509.92,426.50 508.58,431.67 506.4,437 C504.22,442.33 500.90,447.83 497.5,453 C494.10,458.17 492.25,461.83 486,468 C479.75,474.17 486.00,486.33 460,490 C434.00,493.67 353.17,493.67 330,490 C306.83,486.33 323.60,474.17 321,468 C318.40,461.83 316.07,458.17 314.4,453 C312.73,447.83 311.53,442.33 311,437 C310.47,431.67 310.77,426.38 311.2,421 C311.63,415.62 311.98,410.12 313.6,404.7 C315.22,399.28 317.67,393.88 320.9,388.5 C324.13,383.12 327.82,377.90 333,372.4 C338.18,366.90 342.83,360.98 352,355.5 C361.17,350.02 376.83,342.92 388,339.5 C399.17,336.08 408.17,335.00 419,335 Z" fill="none" stroke="#fff" stroke-width="1.8"/>
<line x1="210.3" y1="136" x2="310.4" y2="437" stroke="#fff" stroke-width="1.9" shape-rendering="crispEdges"/>
<line x1="310.4" y1="437" x2="319" y2="464" stroke="#fff" stroke-width="1.9" shape-rendering="crispEdges"/>
<line x1="264.4" y1="136" x2="326.5" y2="383" stroke="#fff" stroke-width="1.9" shape-rendering="crispEdges"/>
<line x1="343.1" y1="136" x2="371.7" y2="344.2" stroke="#fff" stroke-width="1.9" shape-rendering="crispEdges"/>
<line x1="413.4" y1="136" x2="418.9" y2="335" stroke="#fff" stroke-width="1.9" shape-rendering="crispEdges"/>
<line x1="479" y1="136" x2="464.7" y2="343" stroke="#fff" stroke-width="1.9" shape-rendering="crispEdges"/>
<line x1="540.6" y1="136" x2="501.5" y2="377" stroke="#fff" stroke-width="1.9" shape-rendering="crispEdges"/>
<line x1="558.75" y1="136" x2="509.6" y2="396.6" stroke="#fff" stroke-width="1.9" shape-rendering="crispEdges"/>
<line x1="381.3" y1="252.3" x2="390.4" y2="340" stroke="#fff" stroke-width="1.9" shape-rendering="crispEdges"/>
<line x1="390.4" y1="340" x2="401" y2="464" stroke="#fff" stroke-width="1.9" shape-rendering="crispEdges"/>
<rect x="423" y="306" width="22" height="14" rx="1.5" fill="#000" stroke="#1e8ef8" stroke-width="2"/>
<path d="M444.5,308 L446,308 L446,316 L444.5,316" fill="none" stroke="#1e8ef8" stroke-width="1.4"/>
<rect x="423" y="311" width="22" height="1.8" fill="#1e8ef8"/>
<path d="M425,309.5 L443,309.5 M427,314 L442,314 M429,316.5 L439,316.5" stroke="#3f8a66" stroke-width="1.3"/>
<path d="M428.5,307.5 L428.5,310.5 M438.5,307.5 L438.5,310.5 M431,314.5 L436,314.5" stroke="#9ff5dc" stroke-width="1.2"/>
</g>
<rect x="800.5" y="115.5" width="500" height="350" rx="4" fill="#e4e4e4" stroke="#b9b9b9"/>
<rect x="899.5" y="108.5" width="302" height="17" rx="4" fill="#000" opacity="0.12"/>
<rect x="899.5" y="107.5" width="302" height="17" rx="4" fill="url(#gTab)" stroke="#8a8a8a"/>
<clipPath id="c899"><rect x="899" y="107" width="113" height="18"/></clipPath>
<rect x="899.5" y="107.5" width="302" height="17" rx="4" fill="url(#gTabSel)" stroke="#2f62c8" clip-path="url(#c899)"/>
<rect x="903" y="107" width="109" height="1" fill="#3434a0"/>
<rect x="903" y="124" width="295" height="1" fill="#5a5a5a"/>
<rect x="1012" y="108" width="1" height="16" fill="#b4b4b4"/>
<rect x="1061" y="108" width="1" height="16" fill="#b4b4b4"/>
<rect x="1123" y="108" width="1" height="16" fill="#b4b4b4"/>
<text x="910" y="120" font-size="11" font-weight="normal" fill="#000" text-anchor="start" textLength="92" lengthAdjust="spacingAndGlyphs" stroke="#000" stroke-width="0.1" >Object Placement</text>
<text x="1023" y="120" font-size="11" font-weight="normal" fill="#000" text-anchor="start" textLength="28.2" lengthAdjust="spacingAndGlyphs" stroke="#000" stroke-width="0.1" >Slicer</text>
<text x="1072" y="120" font-size="11" font-weight="normal" fill="#000" text-anchor="start" textLength="41.2" lengthAdjust="spacingAndGlyphs" stroke="#000" stroke-width="0.1" >G-Code</text>
<text x="1133.8" y="120" font-size="11" font-weight="normal" fill="#000" text-anchor="start" textLength="56.2" lengthAdjust="spacingAndGlyphs" stroke="#000" stroke-width="0.1" >Print Panel</text>
<rect x="803.5" y="128.5" width="490" height="31" fill="url(#gBtn)" stroke="#8c8c8c"/>
<rect x="1051" y="129" width="1" height="30" fill="#8c8c8c"/>
<text x="910.6" y="148.3" font-size="11" font-weight="normal" fill="#000" text-anchor="start" textLength="61" lengthAdjust="spacingAndGlyphs" stroke="#000" stroke-width="0.1" >Save as STL</text>
<text x="1147.5" y="148.3" font-size="11" font-weight="normal" fill="#000" text-anchor="start" textLength="82.5" lengthAdjust="spacingAndGlyphs" stroke="#000" stroke-width="0.1" >Slice with Slic3r</text>
<path d="M812,135.5 Q812,134.3 813.2,134.3 L828,134.3 L830.6,137 L830.6,151 Q830.6,152.2 829.4,152.2 L813.2,152.2 Q812,152.2 812,151 Z" fill="#6a6a6a"/>
<rect x="814.5" y="136" width="12" height="5.5" fill="#ececec"/><rect x="823.5" y="136.5" width="1.3" height="3.5" fill="#333"/>
<circle cx="1069" cy="143.5" r="7.2540000000000004" fill="#6a6a6a"/>
<rect x="1067.1" y="134.2" width="3.8" height="9.3" fill="#6a6a6a" transform="rotate(0.0 1069 143.5)"/>
<rect x="1067.1" y="134.2" width="3.8" height="9.3" fill="#6a6a6a" transform="rotate(45.0 1069 143.5)"/>
<rect x="1067.1" y="134.2" width="3.8" height="9.3" fill="#6a6a6a" transform="rotate(90.0 1069 143.5)"/>
<rect x="1067.1" y="134.2" width="3.8" height="9.3" fill="#6a6a6a" transform="rotate(135.0 1069 143.5)"/>
<rect x="1067.1" y="134.2" width="3.8" height="9.3" fill="#6a6a6a" transform="rotate(180.0 1069 143.5)"/>
<rect x="1067.1" y="134.2" width="3.8" height="9.3" fill="#6a6a6a" transform="rotate(225.0 1069 143.5)"/>
<rect x="1067.1" y="134.2" width="3.8" height="9.3" fill="#6a6a6a" transform="rotate(270.0 1069 143.5)"/>
<rect x="1067.1" y="134.2" width="3.8" height="9.3" fill="#6a6a6a" transform="rotate(315.0 1069 143.5)"/>
<circle cx="1069" cy="143.5" r="3.5" fill="#ececec"/>
<text x="817.5" y="178.9" font-size="11" font-weight="bold" fill="#000" text-anchor="start" textLength="67" lengthAdjust="spacingAndGlyphs" stroke="#000" stroke-width="0.1" >Translation:</text>
<text x="817.5" y="208.8" font-size="11" font-weight="bold" fill="#000" text-anchor="start" textLength="31" lengthAdjust="spacingAndGlyphs" stroke="#000" stroke-width="0.1" >Scale:</text>
<text x="817.5" y="258.8" font-size="11" font-weight="bold" fill="#000" text-anchor="start" textLength="38" lengthAdjust="spacingAndGlyphs" stroke="#000" stroke-width="0.1" >Rotate:</text>
<rect x="916.5" y="166.5" width="62" height="20.5" fill="#fff" stroke="#a8a8a8"/>
<rect x="916" y="166" width="63" height="1" fill="#8a8a8a"/>
<rect x="917" y="167" width="61" height="1" fill="#d4d4d4"/>
<text x="903" y="178.9" font-size="11" font-weight="normal" fill="#000" text-anchor="start" textLength="8" lengthAdjust="spacingAndGlyphs" stroke="#000" stroke-width="0.1" >X</text>
<text x="920.3" y="180.4" font-size="11" font-weight="normal" fill="#000" text-anchor="start" textLength="23.3" lengthAdjust="spacingAndGlyphs" stroke="#000" stroke-width="0.1" >6.45</text>
<rect x="999.5" y="166.5" width="62" height="20.5" fill="#fff" stroke="#a8a8a8"/>
<rect x="999" y="166" width="63" height="1" fill="#8a8a8a"/>
<rect x="1000" y="167" width="61" height="1" fill="#d4d4d4"/>
<text x="986" y="178.9" font-size="11" font-weight="normal" fill="#000" text-anchor="start" textLength="8" lengthAdjust="spacingAndGlyphs" stroke="#000" stroke-width="0.1" >Y</text>
<text x="1003.3" y="180.4" font-size="11" font-weight="normal" fill="#000" text-anchor="start" textLength="44.2" lengthAdjust="spacingAndGlyphs" stroke="#000" stroke-width="0.1" >214.422</text>
<rect x="1082.5" y="166.5" width="62" height="18" fill="#fff" stroke="#a8a8a8"/>
<rect x="1082" y="166" width="63" height="1" fill="#8a8a8a"/>
<rect x="1083" y="167" width="61" height="1" fill="#d4d4d4"/>
<text x="1069" y="178.9" font-size="11" font-weight="normal" fill="#000" text-anchor="start" textLength="7.5" lengthAdjust="spacingAndGlyphs" stroke="#000" stroke-width="0.1" >Z</text>
<rect x="1086.7" y="175.3" width="4.8" height="1" fill="#333"/>
<text x="1092.3" y="180.4" font-size="11" font-weight="normal" fill="#000" text-anchor="start" textLength="6.8" lengthAdjust="spacingAndGlyphs" stroke="#000" stroke-width="0.1" >0</text>
<rect x="916.5" y="196.5" width="62" height="20.5" fill="#fff" stroke="#a8a8a8"/>
<rect x="916" y="196" width="63" height="1" fill="#8a8a8a"/>
<rect x="917" y="197" width="61" height="1" fill="#d4d4d4"/>
<text x="903" y="208.8" font-size="11" font-weight="normal" fill="#000" text-anchor="start" textLength="8" lengthAdjust="spacingAndGlyphs" stroke="#000" stroke-width="0.1" >X</text>
<text x="920.3" y="210.3" font-size="11" font-weight="normal" fill="#000" text-anchor="start" textLength="5.5" lengthAdjust="spacingAndGlyphs" stroke="#000" stroke-width="0.1" >1</text>
<rect x="999.5" y="196.5" width="62" height="20.5" fill="#fbfbfb" stroke="#dcdcdc"/>
<text x="986" y="208.8" font-size="11" font-weight="normal" fill="#000" text-anchor="start" textLength="8" lengthAdjust="spacingAndGlyphs" stroke="#000" stroke-width="0.1" >Y</text>
<text x="1003.3" y="210.3" font-size="11" font-weight="normal" fill="#8a7f78" text-anchor="start" textLength="5.5" lengthAdjust="spacingAndGlyphs" stroke="#8a7f78" stroke-width="0.1" >1</text>
<rect x="1082.5" y="196.5" width="62" height="18" fill="#fbfbfb" stroke="#dcdcdc"/>
<text x="1069" y="208.8" font-size="11" font-weight="normal" fill="#000" text-anchor="start" textLength="7.5" lengthAdjust="spacingAndGlyphs" stroke="#000" stroke-width="0.1" >Z</text>
<text x="1086.3" y="210.3" font-size="11" font-weight="normal" fill="#8a7f78" text-anchor="start" textLength="5.5" lengthAdjust="spacingAndGlyphs" stroke="#8a7f78" stroke-width="0.1" >1</text>
<rect x="916.5" y="246.5" width="62" height="20.5" fill="#fff" stroke="#a8a8a8"/>
<rect x="916" y="246" width="63" height="1" fill="#8a8a8a"/>
<rect x="917" y="247" width="61" height="1" fill="#d4d4d4"/>
<text x="903" y="258.8" font-size="11" font-weight="normal" fill="#000" text-anchor="start" textLength="8" lengthAdjust="spacingAndGlyphs" stroke="#000" stroke-width="0.1" >X</text>
<text x="920.3" y="260.3" font-size="11" font-weight="normal" fill="#000" text-anchor="start" textLength="6.6" lengthAdjust="spacingAndGlyphs" stroke="#000" stroke-width="0.1" >0</text>
<rect x="999.5" y="246.5" width="62" height="20.5" fill="#fff" stroke="#a8a8a8"/>
<rect x="999" y="246" width="63" height="1" fill="#8a8a8a"/>
<rect x="1000" y="247" width="61" height="1" fill="#d4d4d4"/>
<text x="986" y="258.8" font-size="11" font-weight="normal" fill="#000" text-anchor="start" textLength="8" lengthAdjust="spacingAndGlyphs" stroke="#000" stroke-width="0.1" >Y</text>
<text x="1003.3" y="260.3" font-size="11" font-weight="normal" fill="#000" text-anchor="start" textLength="6.6" lengthAdjust="spacingAndGlyphs" stroke="#000" stroke-width="0.1" >0</text>
<rect x="1082.5" y="246.5" width="62" height="18" fill="#fff" stroke="#a8a8a8"/>
<rect x="1082" y="246" width="63" height="1" fill="#8a8a8a"/>
<rect x="1083" y="247" width="61" height="1" fill="#d4d4d4"/>
<text x="1069" y="258.8" font-size="11" font-weight="normal" fill="#000" text-anchor="start" textLength="7.5" lengthAdjust="spacingAndGlyphs" stroke="#000" stroke-width="0.1" >Z</text>
<text x="1086.3" y="260.3" font-size="11" font-weight="normal" fill="#000" text-anchor="start" textLength="6.6" lengthAdjust="spacingAndGlyphs" stroke="#000" stroke-width="0.1" >0</text>
<rect x="818.5" y="226.5" width="13" height="13" rx="2.5" fill="url(#gTabSel)" stroke="#2f4cb0"/>
<rect x="820" y="239" width="11" height="1" fill="#444"/>
<path d="M821.2,230.8 L824.8,236 L832.6,224.4" fill="none" stroke="#1c2838" stroke-width="2.3"/>
<text x="836.5" y="236" font-size="11" font-weight="normal" fill="#000" text-anchor="start" textLength="93.5" lengthAdjust="spacingAndGlyphs" stroke="#000" stroke-width="0.1" >Lock Aspect Ratio</text>
<rect x="803.5" y="284.5" width="490" height="94" fill="#fff" stroke="#9a9a9a"/>
<rect x="804" y="285" width="489" height="15" fill="url(#gHdr)"/>
<rect x="804" y="300" width="489" height="1" fill="#c6c6c6"/>
<rect x="804" y="301" width="489" height="18" fill="#d4d4d4"/>
<rect x="804" y="319" width="489" height="19.5" fill="#e9f0fc"/>
<rect x="804" y="358" width="489" height="20" fill="#e9f0fc"/>
<text x="808" y="296" font-size="11" font-weight="normal" fill="#000" text-anchor="start" textLength="40.8" lengthAdjust="spacingAndGlyphs" stroke="#000" stroke-width="0.1" >STL File</text>
<text x="808" y="312.6" font-size="11" font-weight="normal" fill="#000" text-anchor="start" textLength="132.5" lengthAdjust="spacingAndGlyphs" stroke="#000" stroke-width="0.1" >70766 EZFan Shroud.STL</text>
<rect x="803.5" y="381.5" width="490" height="26" fill="url(#gBtn)" stroke="#8c8c8c"/>
<rect x="1051" y="382" width="1" height="25" fill="#8c8c8c"/>
<rect x="803.5" y="409.5" width="490" height="26" fill="url(#gBtn)" stroke="#8c8c8c"/>
<rect x="1051" y="410" width="1" height="25" fill="#8c8c8c"/>
<rect x="803.5" y="437.5" width="490" height="26" fill="url(#gBtn)" stroke="#8c8c8c"/>
<rect x="1051" y="438" width="1" height="25" fill="#8c8c8c"/>
<text x="900.5" y="398.3" font-size="11" font-weight="normal" fill="#000" text-anchor="start" textLength="78" lengthAdjust="spacingAndGlyphs" stroke="#000" stroke-width="0.1" >Copy Object(s)</text>
<text x="1151.3" y="398.3" font-size="11" font-weight="normal" fill="#000" text-anchor="start" textLength="71.3" lengthAdjust="spacingAndGlyphs" stroke="#000" stroke-width="0.1" >Auto Position</text>
<text x="902.7" y="426.3" font-size="11" font-weight="normal" fill="#000" text-anchor="start" textLength="73.5" lengthAdjust="spacingAndGlyphs" stroke="#000" stroke-width="0.1" >Center Object</text>
<text x="1154.5" y="426.3" font-size="11" font-weight="normal" fill="#000" text-anchor="start" textLength="63.5" lengthAdjust="spacingAndGlyphs" stroke="#000" stroke-width="0.1" >Drop Object</text>
<text x="906.5" y="454.3" font-size="11" font-weight="normal" fill="#000" text-anchor="start" textLength="65" lengthAdjust="spacingAndGlyphs" stroke="#000" stroke-width="0.1" >Add STL File</text>
<text x="1144.3" y="454.3" font-size="11" font-weight="normal" fill="#000" text-anchor="start" textLength="85.3" lengthAdjust="spacingAndGlyphs" stroke="#000" stroke-width="0.1" >Remove STL File</text>
<path d="M811.5,387 Q811.5,385.5 813,385.5 L817,385.5 L820.5,389 L820.5,395.5 L811.5,395.5 Z" fill="#f2f2f2" stroke="#6a6a6a" stroke-width="1.4" stroke-linejoin="round"/>
<rect x="817.5" y="389.5" width="9.5" height="10.5" rx="1.2" fill="#f2f2f2" stroke="#6a6a6a" stroke-width="1.4"/>
<rect x="1057.3" y="385" width="5.6" height="4.6" rx="1.3" fill="#6a6a6a"/>
<rect x="1064.2" y="385" width="5.6" height="4.6" rx="1.3" fill="#6a6a6a"/>
<rect x="1071.1" y="385" width="5.6" height="4.6" rx="1.3" fill="#6a6a6a"/>
<rect x="1057.3" y="390.9" width="5.6" height="4.2" rx="1.3" fill="#6a6a6a"/>
<rect x="1064.2" y="390.9" width="5.6" height="4.2" rx="1.3" fill="#6a6a6a"/>
<rect x="1071.1" y="390.9" width="5.6" height="4.2" rx="1.3" fill="#6a6a6a"/>
<rect x="1057.3" y="396.4" width="5.6" height="4.4" rx="1.3" fill="#6a6a6a"/>
<rect x="1064.2" y="396.4" width="5.6" height="4.4" rx="1.3" fill="#6a6a6a"/>
<rect x="1071.1" y="396.4" width="5.6" height="4.4" rx="1.3" fill="#6a6a6a"/>
<circle cx="819" cy="421.3" r="5.2" fill="none" stroke="#6a6a6a" stroke-width="1.7"/>
<path d="M819,413.2 L819,417.5 M819,425.1 L819,429.4 M810.8,421.3 L815.1,421.3 M822.9,421.3 L827.2,421.3" stroke="#6a6a6a" stroke-width="1.8"/>
<path d="M1067,413.5 L1067,427" stroke="#6a6a6a" stroke-width="3"/><path d="M1059.8,421 L1067,428.2 L1074.2,421" fill="none" stroke="#6a6a6a" stroke-width="3" stroke-linejoin="miter"/>
<path d="M813.5,442.5 L820,442.5 L824.7,447.2 L824.7,456.5 L813.5,456.5 Z" fill="none" stroke="#6a6a6a" stroke-width="1.4" stroke-linejoin="round"/><path d="M819.5,442.5 L819.5,447.8 L824.7,447.8" fill="none" stroke="#6a6a6a" stroke-width="1.2"/><path d="M816,450.5 L822,450.5 M816,453.3 L822,453.3" stroke="#6a6a6a" stroke-width="1.1"/>
<path d="M1060.5,444.2 L1073.5,444.2" stroke="#6a6a6a" stroke-width="1.8" stroke-linecap="round"/><path d="M1064.5,443 L1064.5,441.3 L1069.5,441.3 L1069.5,443" fill="none" stroke="#6a6a6a" stroke-width="1.3"/>
<path d="M1061.5,446.5 L1072.5,446.5 L1072,456 Q1072,457 1071,457 L1063,457 Q1062,457 1062,456 Z" fill="#6a6a6a"/>
<rect x="1064.3" y="448.3" width="1.2" height="7" fill="#eaeaea"/><rect x="1066.5" y="448.3" width="1.2" height="7" fill="#eaeaea"/><rect x="1068.7" y="448.3" width="1.2" height="7" fill="#eaeaea"/>
<text x="90.6" y="496" font-size="11" font-weight="normal" fill="#000" text-anchor="start" textLength="25" lengthAdjust="spacingAndGlyphs" stroke="#000" stroke-width="0.1" >Send</text>
<rect x="153.5" y="483.5" width="84" height="17" rx="8.5" fill="#a2a2a2" stroke="url(#gPillStroke)"/>
<text x="186.7" y="496.3" font-size="11" font-weight="normal" fill="#fbfbfb" text-anchor="start" textLength="19.5" lengthAdjust="spacingAndGlyphs" stroke="#fbfbfb" stroke-width="0.1" >Info</text>
<rect x="246.5" y="483.5" width="84" height="17" rx="8.5" fill="#a2a2a2" stroke="url(#gPillStroke)"/>
<text x="264.7" y="496.3" font-size="11" font-weight="normal" fill="#fbfbfb" text-anchor="start" textLength="48.7" lengthAdjust="spacingAndGlyphs" stroke="#fbfbfb" stroke-width="0.1" >Warnings</text>
<rect x="339.5" y="483.5" width="84" height="17" rx="8.5" fill="#a2a2a2" stroke="url(#gPillStroke)"/>
<text x="366.9" y="496.3" font-size="11" font-weight="normal" fill="#fbfbfb" text-anchor="start" textLength="30.9" lengthAdjust="spacingAndGlyphs" stroke="#fbfbfb" stroke-width="0.1" >Errors</text>
<text x="464.2" y="496" font-size="11" font-weight="normal" fill="#000" text-anchor="start" textLength="22.4" lengthAdjust="spacingAndGlyphs" stroke="#000" stroke-width="0.1" >ACK</text>
<text x="541.3" y="496" font-size="11" font-weight="normal" fill="#000" text-anchor="start" textLength="53.4" lengthAdjust="spacingAndGlyphs" stroke="#000" stroke-width="0.1" >Autoscroll</text>
<rect x="618.5" y="483.5" width="84" height="17" rx="8.5" fill="url(#gBtn)" stroke="#8a8a8a"/>
<rect x="711.5" y="483.5" width="82" height="17" rx="8.5" fill="url(#gBtn)" stroke="#8a8a8a"/>
<text x="647.7" y="496" font-size="11" font-weight="normal" fill="#000" text-anchor="start" textLength="27.3" lengthAdjust="spacingAndGlyphs" stroke="#000" stroke-width="0.1" >Copy</text>
<text x="727.3" y="496" font-size="11" font-weight="normal" fill="#000" text-anchor="start" textLength="50" lengthAdjust="spacingAndGlyphs" stroke="#000" stroke-width="0.1" >Clear Log</text>
<rect x="40" y="504" width="1240" height="1" fill="#8a8a8a"/>
<rect x="41" y="505" width="70" height="34" fill="#5f9a9c"/>
<rect x="111" y="505" width="1169" height="34" fill="#fff"/>
<rect x="40" y="505" width="1" height="213" fill="#b0b0b0"/>
<rect x="41" y="677" width="1239" height="15.5" fill="#e6e6e6"/>
<rect x="41" y="677" width="1239" height="0.8" fill="#d8cfc4"/>
<rect x="41" y="691" width="1239" height="1.5" fill="#b4b4b4"/>
<path d="M54,677.8 L1249.5,677.8 A6.5,6.5 0 0 1 1249.5,690.8 L54,690.8 A6.5,6.5 0 0 1 54,677.8 Z" fill="url(#gProg)"/>
<path d="M54,677.8 L1249.5,677.8 A6.5,6.5 0 0 1 1249.5,690.8 L54,690.8 A6.5,6.5 0 0 1 54,677.8 Z" fill="url(#pSpots)"/>
<path d="M54,678.3 L1249.5,678.3 A6,6 0 0 1 1249.5,690.3 L54,690.3 A6,6 0 0 1 54,678.3 Z" fill="none" stroke="#0b3fc6" stroke-width="1" stroke-opacity="0.9"/>
<rect x="54" y="690.3" width="1196" height="1" fill="#5a5550"/>
<path d="M1256,677.5 L1264,677.5 A7,7 0 0 1 1264,692 L1256,692 Z" fill="#f2f2f2"/><path d="M1264,677.5 A7,7 0 0 1 1264,692" fill="none" stroke="#bdbdbd"/>
<path d="M1281,680 L1276,684.5 L1281,689 Z" fill="#555"/>
<text x="47.3" y="707.8" font-size="11" font-weight="normal" fill="#000" text-anchor="start" textLength="34.7" lengthAdjust="spacingAndGlyphs" stroke="#000" stroke-width="0.1" >Offline</text>
<rect x="295.5" y="698.5" width="197" height="10" rx="1.5" fill="url(#gBevel)" stroke="#c0c0c0"/>
<text x="515.2" y="707.8" font-size="11" font-weight="normal" fill="#000" text-anchor="start" textLength="41.8" lengthAdjust="spacingAndGlyphs" stroke="#000" stroke-width="0.1" >357 FPS</text>
<text x="568" y="707.8" font-size="11" font-weight="normal" fill="#000" text-anchor="start" textLength="125.3" lengthAdjust="spacingAndGlyphs" stroke="#000" stroke-width="0.1" >Unknown printer firm…</text>
<text x="701" y="707.8" font-size="11" font-weight="normal" fill="#000" text-anchor="start" textLength="71.3" lengthAdjust="spacingAndGlyphs" stroke="#000" stroke-width="0.1" >Disconnected</text>
</svg></body></html>
